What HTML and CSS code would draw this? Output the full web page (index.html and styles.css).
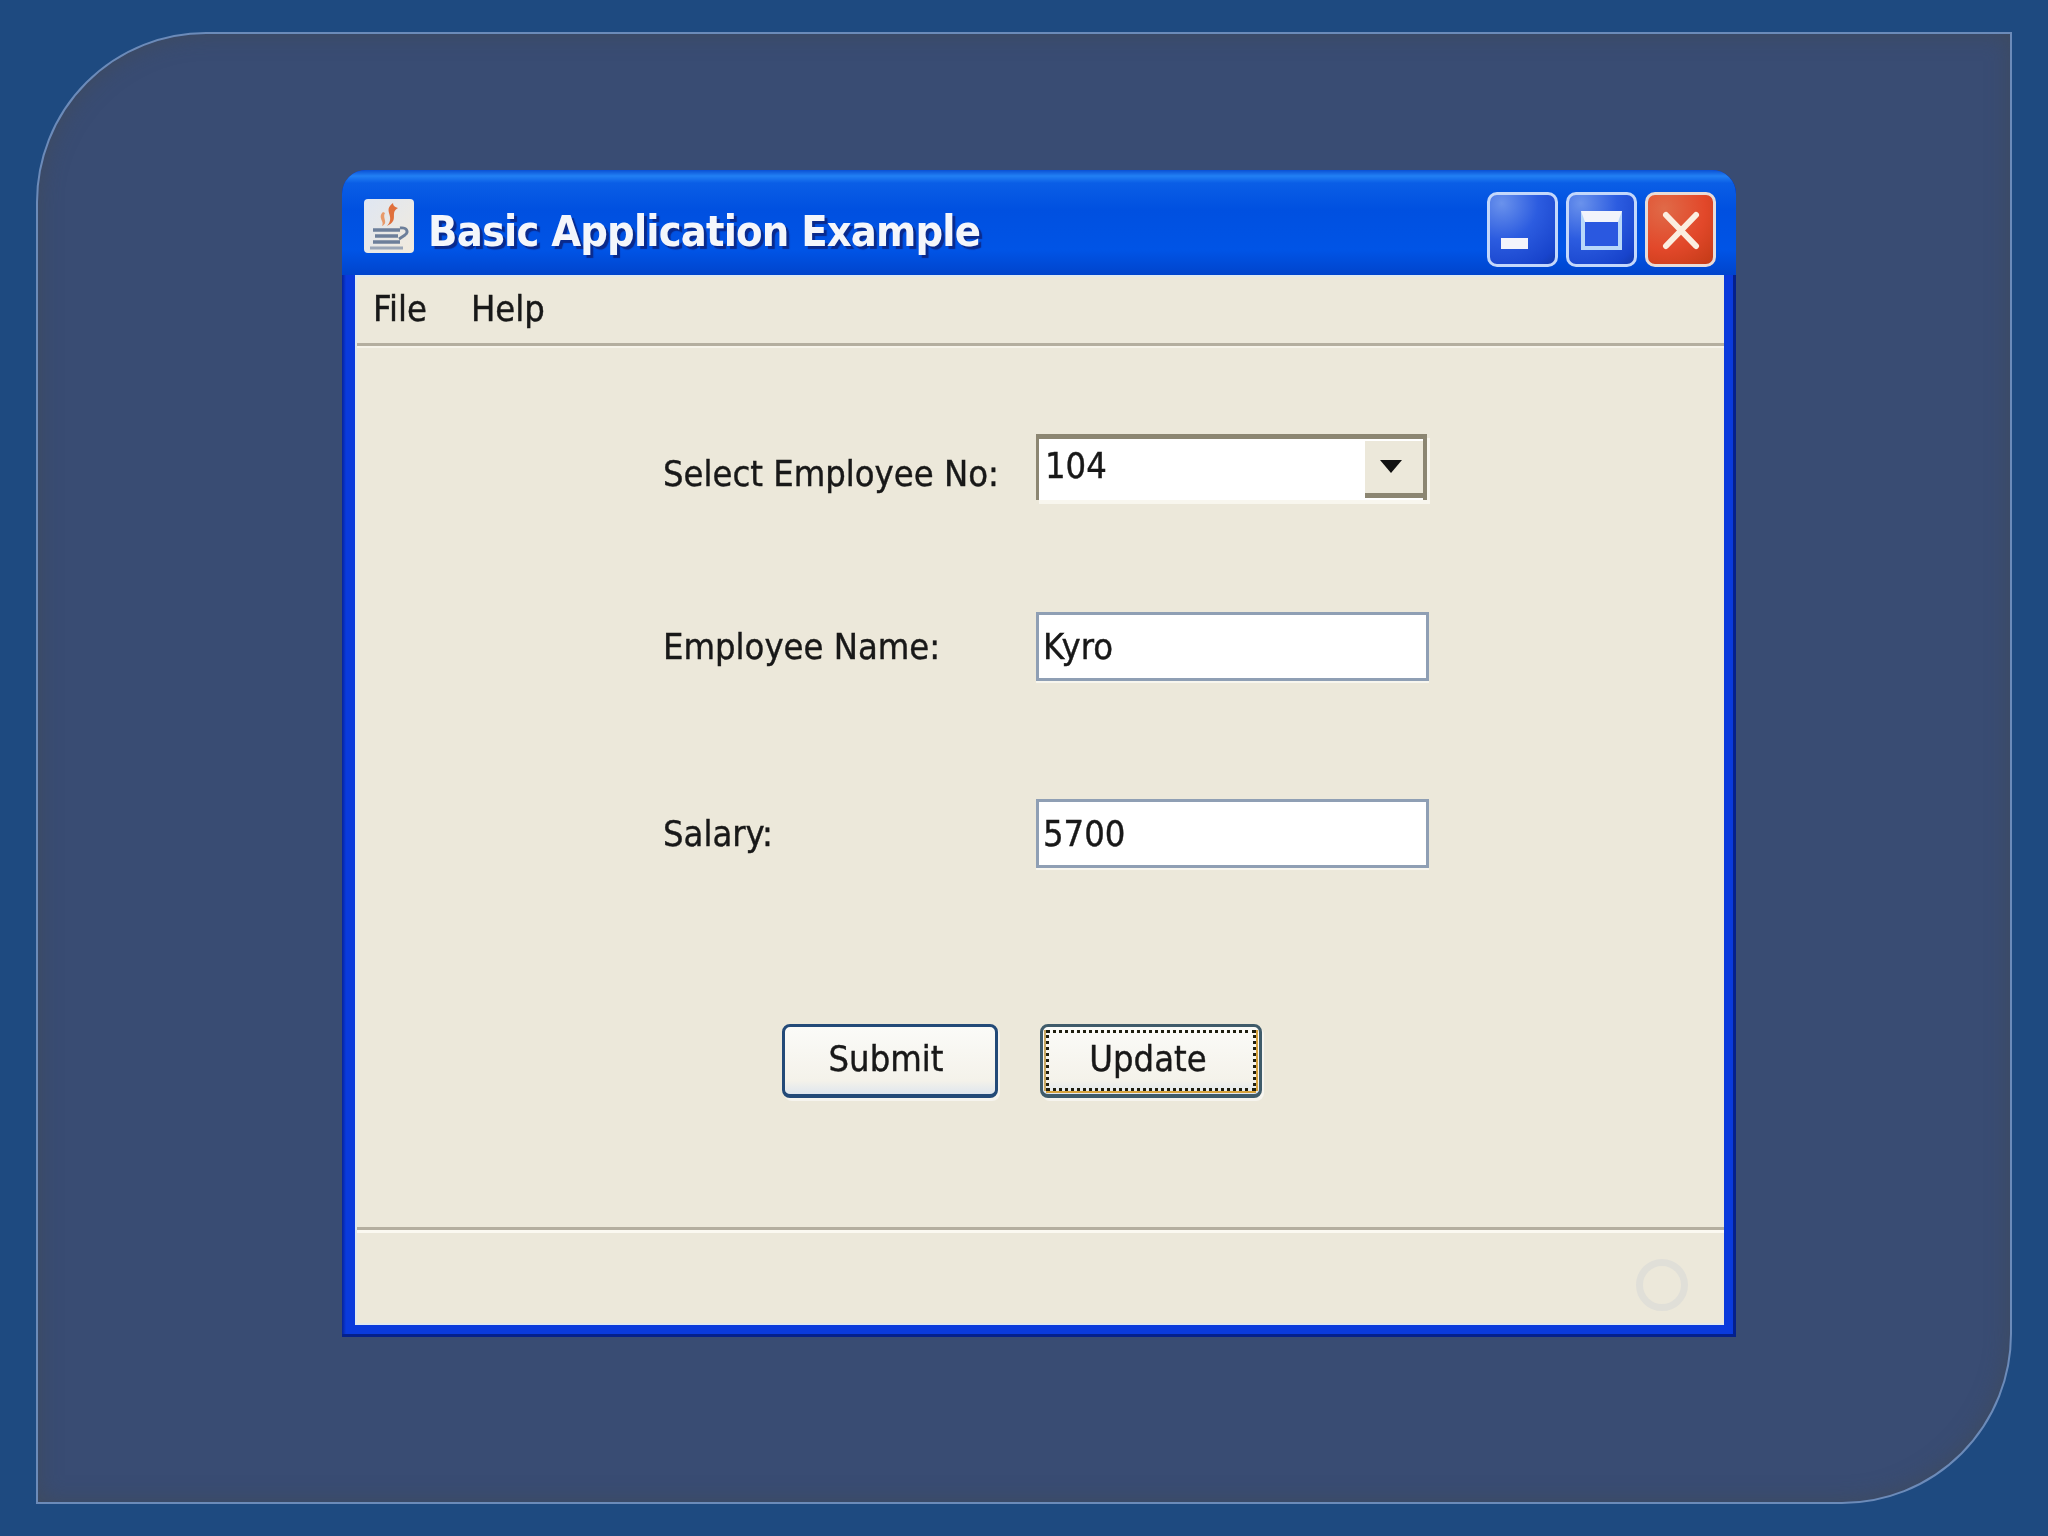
FILE: index.html
```html
<!DOCTYPE html>
<html lang="en">
<head>
<meta charset="utf-8">
<title>Basic Application Example</title>
<link rel="stylesheet" href="styles.css">
</head>
<body>
<main class="slide">
  <section class="window">
    <header class="titlebar">
      <svg class="app-icon" viewBox="0 0 52 56" aria-hidden="true">
        <defs>
          <linearGradient id="tile" x1="0" y1="0" x2="1" y2="1"><stop offset="0" stop-color="#dfe6f2"/><stop offset="1" stop-color="#f2ebdd"/></linearGradient>
        </defs>
        <rect x="1" y="1" width="50" height="54" rx="4" fill="url(#tile)"/>
        <path d="M30 5c-11 8 3 13-6 23 13-6 2-13 11-18-3-1-5-2-5-5z" fill="#e0703c"/>
        <path d="M20 14c-6 6 2 9-1 14 7-3 0-8 3-13z" fill="#e89a6a"/>
        <path d="M10 32h27M12 38h23M10 44h27" stroke="#6d7f9a" stroke-width="3.6" fill="none"/>
        <path d="M37 30c7-1 9 4 5 7l-6 4" stroke="#6d7f9a" stroke-width="2.8" fill="none"/>
        <path d="M7 50h33" stroke="#9aa6b8" stroke-width="3"/>
      </svg>
      <h1 class="title">Basic Application Example</h1>
      <div class="controls">
        <div class="ctl"><span class="glyph-min"></span></div>
        <div class="ctl"><span class="glyph-max"></span></div>
        <div class="ctl ctl-close">
          <svg class="glyph-x" viewBox="0 0 38 39" aria-hidden="true"><path d="M4 4l30 31M34 4L4 35" stroke="#fbeee0" stroke-width="6" stroke-linecap="round"/></svg>
        </div>
      </div>
    </header>
    <div class="client">
      <nav class="menubar"><span class="menu-file">File</span><span>Help</span></nav>
      <form class="form">
        <div class="row row-combo">
          <label class="label label-low">Select Employee No:</label>
          <div class="combo">
            <span class="combo-value">104</span>
            <span class="combo-btn"><span class="arrow"></span></span>
          </div>
        </div>
        <div class="row row-name">
          <label class="label">Employee Name:</label>
          <div class="field">Kyro</div>
        </div>
        <div class="row row-salary">
          <label class="label">Salary:</label>
          <div class="field">5700</div>
        </div>
        <div class="actions">
          <div class="btn btn-submit">Submit</div>
          <div class="btn btn-update"><span class="focus">Update</span></div>
        </div>
      </form>
      <footer class="statusbar"><span class="spinner"></span></footer>
    </div>
  </section>
</main>
</body>
</html>
```

FILE: styles.css
```css
* { box-sizing: border-box; }
html, body { margin: 0; height: 100%; }
body {
  background: #1e4a80;
  width: 2048px;
  height: 1536px;
  padding: 32px 36px 32px 36px;
  font-family: "DejaVu Sans", sans-serif;
  font-stretch: condensed;
  color: #181818;
}
.slide {
  width: 1976px;
  height: 1472px;
  background: #394c73;
  border: 2px solid #6c8bb9;
  border-radius: 170px 0 170px 0;
  box-shadow: inset 0 0 22px rgba(66, 74, 84, 0.7);
  padding: 136px 0 0 304px;
}
.window {
  width: 1394px;
  height: 1167px;
  background: linear-gradient(90deg, #06239a 0, #0a3adc 4px, #0a3adc 100%);
  border-radius: 24px 24px 0 0;
  padding: 0 12px 12px 13px;
  display: flex;
  flex-direction: column;
  box-shadow: inset -3px -3px 0 #04208c;
  filter: blur(0.7px);
}
.titlebar {
  height: 105px;
  margin: 0 -12px 0 -13px;
  padding: 28px 20px 0 21px;
  border-radius: 24px 24px 0 0;
  display: flex;
  align-items: flex-start;
  background: linear-gradient(180deg, #0a50d4 0, #2280f4 6px, #0a5ee6 13px, #0050e0 40px, #0054e6 80px, #0044cc 100%);
}
.app-icon { width: 52px; height: 56px; flex: none; }
.title {
  margin: 8px 0 0 13px;
  font-size: 43px;
  line-height: 50px;
  font-weight: 700;
  letter-spacing: -0.85px;
  color: #f4f6fb;
  text-shadow: 3px 3px 1px #0a2a8c;
  white-space: nowrap;
  flex: 1;
}
.controls { display: flex; gap: 8px; margin-top: -6px; }
.ctl {
  width: 71px;
  height: 75px;
  border: 3px solid #c4d8fb;
  border-radius: 10px;
  background: radial-gradient(circle at 18% 12%, #6a92ec 0, #2c5ce0 45%, #1844cc 85%, #123aae 100%);
  display: flex;
  align-items: center;
  justify-content: center;
}
.ctl-close {
  background: radial-gradient(circle at 25% 20%, #e06a48 0, #e2482a 55%, #c23a16 100%);
  border-color: #e8dcd8;
}
.glyph-min { width: 27px; height: 11px; background: #f4f4fb; margin: 28px 0 0 -16px; }
.glyph-max {
  width: 41px;
  height: 39px;
  border: 4px solid #b8d8fa;
  border-top: 11px solid #f2f4fb;
  margin-top: 2px;
  background: #2a58e0;
}
.glyph-x { width: 38px; height: 39px; margin-top: 2px; }
.client {
  flex: 1;
  display: flex;
  flex-direction: column;
  background: #ece8da;
  border: 1px solid #dfe8ee;
  border-width: 2px 0 2px 2px;
  font-size: 36px;
  -webkit-text-stroke: 0.4px #181818;
}
.menubar {
  height: 69px;
  flex: none;
  padding: 10px 0 0 16px;
  line-height: 44px;
  border-bottom: 3px solid #b4ae9f;
  box-shadow: 0 2px 0 #f6f3e9;
}
.menu-file { margin-right: 44px; }
.form {
  flex: 1;
  padding: 88px 0 0 306px;
  display: flex;
  flex-direction: column;
}
.row { display: flex; align-items: center; }
.row-combo { margin-bottom: 112px; }
.row-name { margin-bottom: 118px; }
.row-salary { margin-bottom: 156px; }
.label { width: 373px; flex: none; white-space: nowrap; }
.label-low { padding-top: 12px; }
.combo {
  width: 391px;
  height: 66px;
  background: #fff;
  border-top: 5px solid #8c8672;
  border-left: 3px solid #8c8672;
  border-right: 4px solid #8c8672;
  box-shadow: 3px 4px 0 #f8f6ee;
  display: flex;
  justify-content: space-between;
  padding-left: 6px;
}
.combo-value { line-height: 54px; }
.combo-btn {
  width: 58px;
  background: #ece8da;
  margin-top: 2px;
  border-bottom: 5px solid #8c8672;
  height: 57px;
  display: flex;
  justify-content: center;
  padding: 19px 6px 0 0;
}
.arrow {
  width: 0;
  height: 0;
  border-left: 11px solid transparent;
  border-right: 11px solid transparent;
  border-top: 13px solid #111;
}
.field {
  width: 393px;
  height: 69px;
  background: #fff;
  border: 3px solid #8f9fb4;
  box-shadow: 0 2px 0 #f8f6ee;
  padding: 0 4px;
  line-height: 63px;
}
.actions { display: flex; gap: 42px; padding-left: 119px; }
.btn {
  height: 74px;
  background: linear-gradient(180deg, #fbfbf8 0, #f4f2ea 80%, #dfe6ee 100%);
  border: 3px solid #234a78;
  border-bottom-width: 4px;
  border-radius: 8px;
  box-shadow: 2px 3px 0 #f6f4ee;
  display: flex;
  align-items: center;
  justify-content: center;
  padding-bottom: 4px;
}
.btn-submit { width: 216px; padding-right: 8px; }
.btn-update { width: 222px; padding: 3px; border-color: #3f5b6a; }
.focus {
  width: 100%;
  height: 100%;
  display: flex;
  align-items: center;
  justify-content: center;
  padding: 0 6px 4px 0;
  border: 3px dotted #1e1e10;
  box-shadow: 0 2px 0 #d8a23a, 2px 0 0 #d8a23a, -2px 0 0 #c9a860;
}
.statusbar {
  height: 96px;
  flex: none;
  border-top: 3px solid #b4ae9f;
  box-shadow: inset 0 3px 0 #fbf9f1;
  display: flex;
  justify-content: flex-end;
  align-items: center;
  padding: 16px 36px 0 0;
}
.spinner {
  width: 52px;
  height: 52px;
  border: 7px solid #e0dfd8;
  border-radius: 50%;
}
```
